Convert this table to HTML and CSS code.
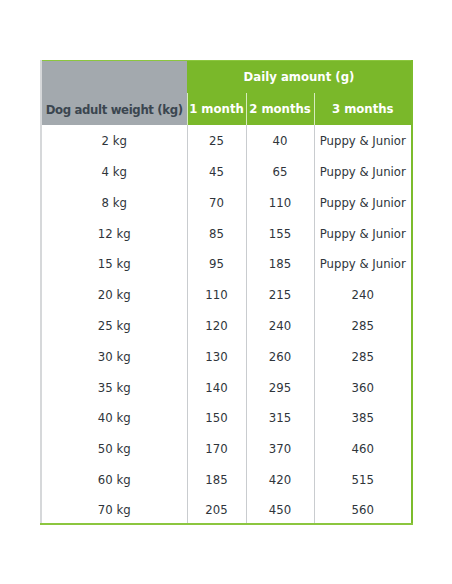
FILE: index.html
```html
<!DOCTYPE html>
<html>
<head>
<meta charset="utf-8">
<link rel="stylesheet" href="styles.css">
</head>
<body>
<div class="page">
<table class="feed">
  <colgroup>
    <col class="c-weight"><col class="c-m1"><col class="c-m2"><col class="c-m3">
  </colgroup>
  <thead>
    <tr class="h-top">
      <th class="h-weight" rowspan="2">Dog adult weight (kg)</th>
      <th class="h-daily" colspan="3">Daily amount (g)</th>
    </tr>
    <tr class="h-sub">
      <th class="h-month">1 month</th>
      <th class="h-month">2 months</th>
      <th class="h-month">3 months</th>
    </tr>
  </thead>
  <tbody>
    <tr><td>2 kg</td><td>25</td><td>40</td><td>Puppy &amp; Junior</td></tr>
    <tr><td>4 kg</td><td>45</td><td>65</td><td>Puppy &amp; Junior</td></tr>
    <tr><td>8 kg</td><td>70</td><td>110</td><td>Puppy &amp; Junior</td></tr>
    <tr><td>12 kg</td><td>85</td><td>155</td><td>Puppy &amp; Junior</td></tr>
    <tr><td>15 kg</td><td>95</td><td>185</td><td>Puppy &amp; Junior</td></tr>
    <tr><td>20 kg</td><td>110</td><td>215</td><td>240</td></tr>
    <tr><td>25 kg</td><td>120</td><td>240</td><td>285</td></tr>
    <tr><td>30 kg</td><td>130</td><td>260</td><td>285</td></tr>
    <tr><td>35 kg</td><td>140</td><td>295</td><td>360</td></tr>
    <tr><td>40 kg</td><td>150</td><td>315</td><td>385</td></tr>
    <tr><td>50 kg</td><td>170</td><td>370</td><td>460</td></tr>
    <tr><td>60 kg</td><td>185</td><td>420</td><td>515</td></tr>
    <tr><td>70 kg</td><td>205</td><td>450</td><td>560</td></tr>
  </tbody>
</table>
</div>
</body>
</html>
```
FILE: styles.css
```css
html, body {
  margin: 0;
  padding: 0;
  background: #ffffff;
}
.page {
  padding: 60px 0 0 40px;
}
.feed {
  border-collapse: collapse;
  table-layout: fixed;
  width: 371px;
  font-family: "DejaVu Sans Condensed", "DejaVu Sans", sans-serif;
  font-size: 13px;
  line-height: 15px;
  color: #2f353b;
  border-top: 1px solid #8cc63f;
  border-right: 2px solid #7cbc2c;
  border-bottom: 2px solid #8cc63f;
  border-left: 2px solid #d6d8da;
}
.c-weight { width: 146px; }
.c-m1 { width: 59px; }
.c-m2 { width: 68px; }
.c-m3 { width: 98px; }
.feed th {
  font-weight: bold;
  padding: 0;
}
.h-top { height: 32px; }
.h-sub { height: 32px; }
.feed th.h-weight {
  background: #a3a9ae;
  color: #3b4650;
  vertical-align: bottom;
  letter-spacing: -0.35px;
  padding-bottom: 8px;
}
.h-daily {
  background: #7ab82a;
  color: #ffffff;
}
.h-sub th {
  background: #7ab82a;
  color: #ffffff;
  border-left: 1px solid #d7ebbe;
}
.feed tbody tr { height: 30.77px; }
.feed td {
  text-align: center;
  padding: 2px 0 0;
  border-left: 1px solid #c9cccf;
}
.feed td:first-child {
  border-left: none;
}
```
